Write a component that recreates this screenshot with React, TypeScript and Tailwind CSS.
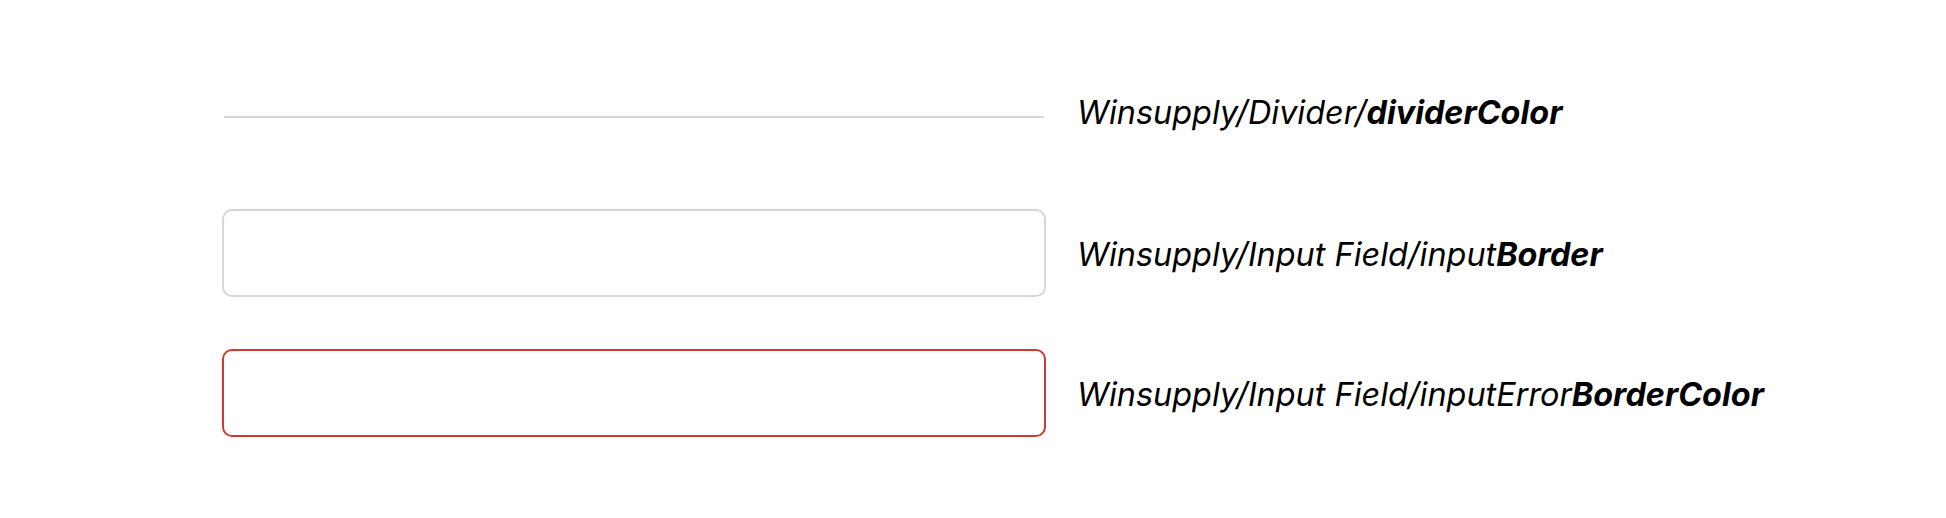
import React from 'react';

const Label: React.FC<{ plain: string; bold: string; className?: string }> = ({ plain, bold, className = '' }) => (
  <span className={`italic text-[32.4px] leading-none text-black ${className}`}>
    {plain}
    <strong className="font-bold">{bold}</strong>
  </span>
);

export default function App() {
  return (
    <div
      className="w-[1946px] h-[518px] bg-white pt-[73px] pl-[222px]"
      style={{ fontFamily: 'Inter, "Noto Sans", sans-serif' }}
    >
      <div className="flex items-center gap-[31px] h-[88px]">
        <div className="w-[824px] flex">
          <div className="ml-[2px] w-[820px] h-[2px] bg-[#d4d6db]" />
        </div>
        <Label plain="Winsupply/Divider/" bold="dividerColor" className="mb-2" />
      </div>
      <div className="flex items-center gap-[31px] h-[88px] mt-[48px]">
        <div className="w-[824px] h-[88px] rounded-[10px] border-2 border-[#d4d6db]" />
        <Label plain="Winsupply/Input Field/input" bold="Border" className="mt-1" />
      </div>
      <div className="flex items-center gap-[31px] h-[88px] mt-[52px]">
        <div className="w-[824px] h-[88px] rounded-[10px] border-2 border-[#cf3a33]" />
        <Label plain="Winsupply/Input Field/inputError" bold="BorderColor" className="mt-1" />
      </div>
    </div>
  );
}
